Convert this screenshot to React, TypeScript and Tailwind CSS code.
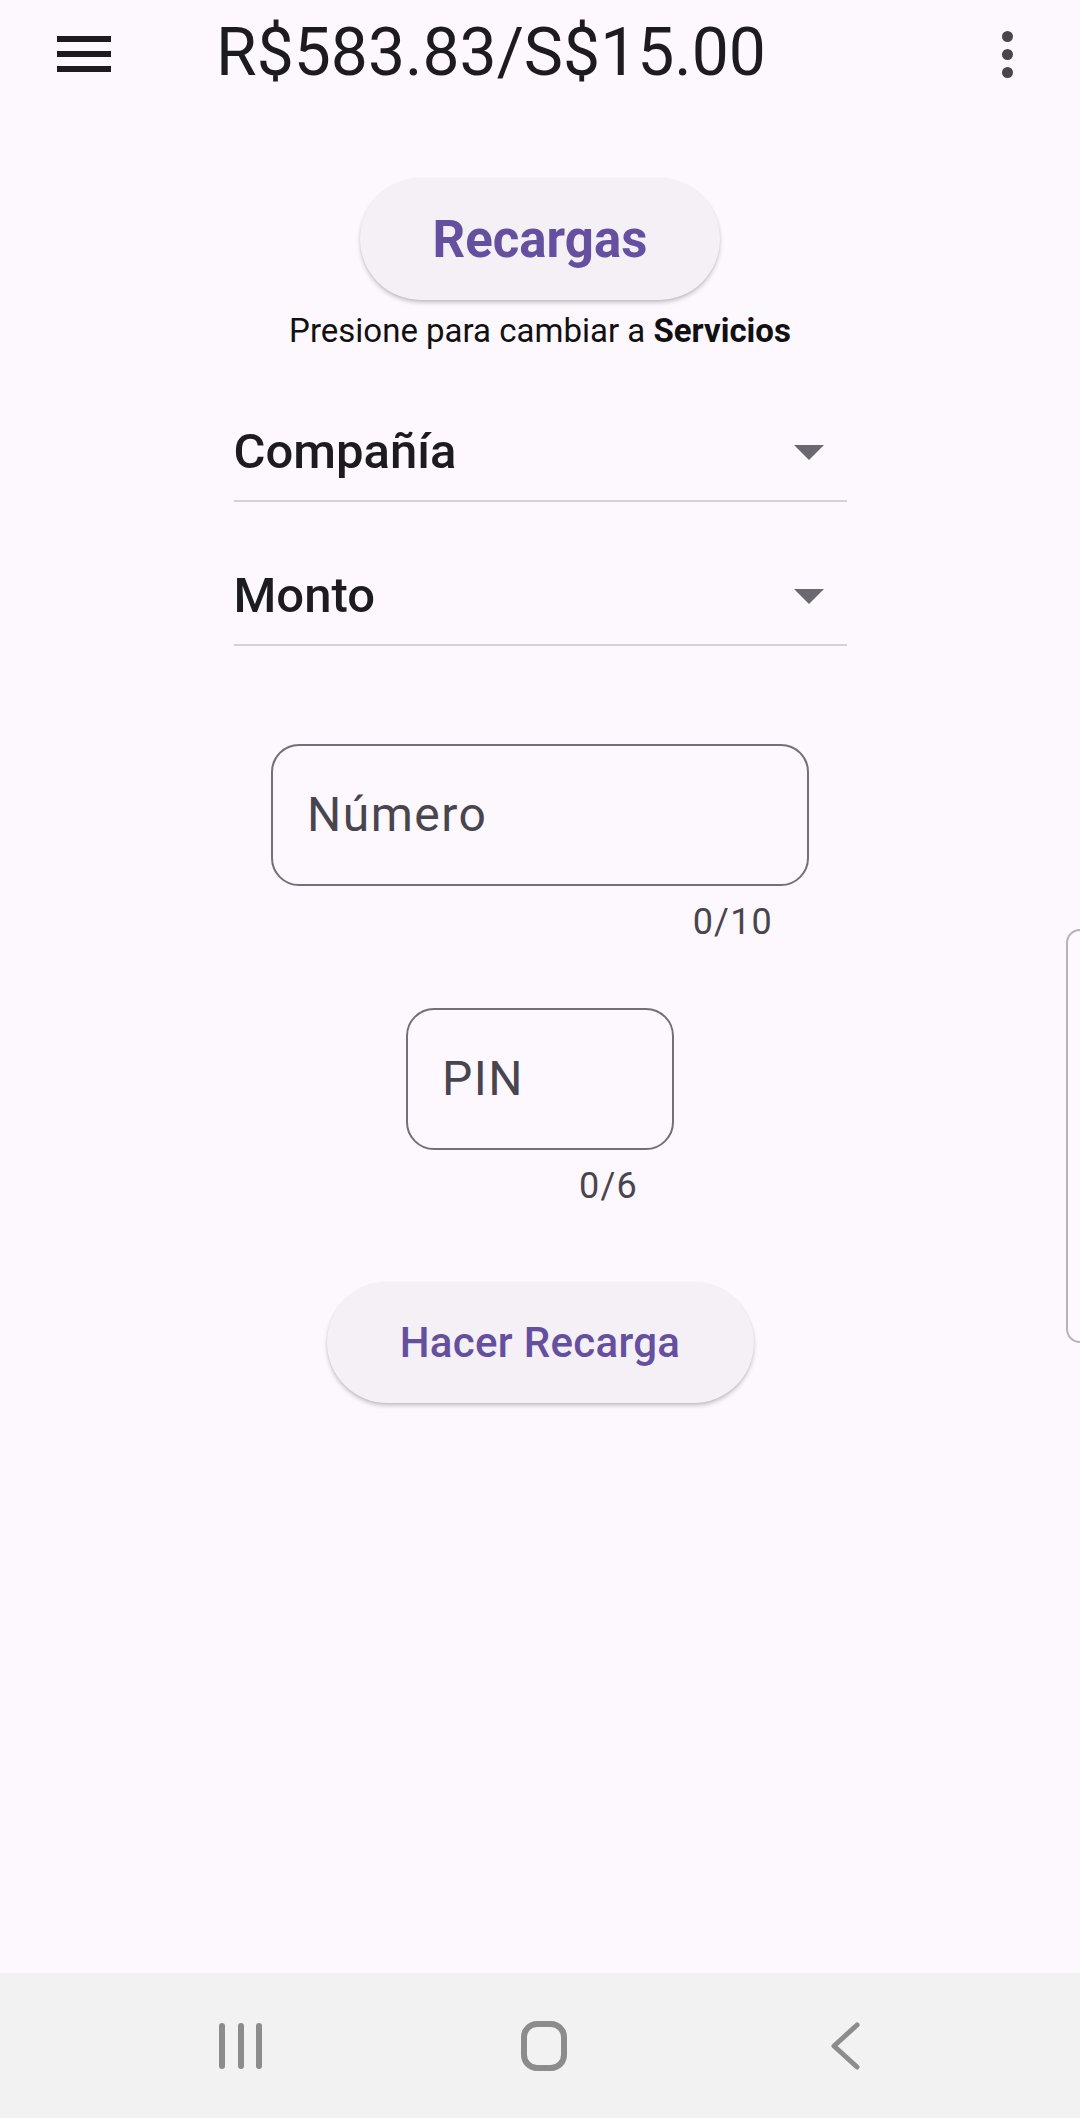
import React from "react";

const font = { fontFamily: "Roboto, 'Noto Sans', sans-serif" };

function Dropdown({ label }: { label: string }) {
  return (
    <div className="w-[613px] flex items-center justify-between border-b-2 border-[#d6d1d9] pb-[20px]">
      <span className="text-[49px] leading-[56px] font-medium text-[#1d1b20]">{label}</span>
      <svg width="30" height="15" viewBox="0 0 30 15" className="mr-[23px]">
        <path d="M0 0 L30 0 L15 15 Z" fill="#6b6870" />
      </svg>
    </div>
  );
}

export default function App() {
  return (
    <div style={font} className="relative w-[1080px] h-[2118px] bg-[#fdf7fe] flex flex-col overflow-hidden">
      {/* Header */}
      <div className="h-[108px] flex items-center shrink-0">
        <div className="ml-[57px] w-[54px] flex flex-col gap-[9px]">
          <div className="h-[6px] bg-[#1d1b20]" />
          <div className="h-[6px] bg-[#1d1b20]" />
          <div className="h-[6px] bg-[#1d1b20]" />
        </div>
        <div className="ml-[105px] text-[66px] leading-[66px] text-[#1d1b20] mt-[-3px]">R$583.83/S$15.00</div>
        <div className="ml-auto mr-[67px] flex flex-col gap-[7px]">
          <div className="w-[11px] h-[11px] rounded-full bg-[#49454f]" />
          <div className="w-[11px] h-[11px] rounded-full bg-[#49454f]" />
          <div className="w-[11px] h-[11px] rounded-full bg-[#49454f]" />
        </div>
      </div>

      {/* Main */}
      <div className="flex-1 flex flex-col items-center">
        <button className="mt-[70px] w-[360px] h-[122px] rounded-full bg-[#f5eff6] shadow-[0_3px_4px_rgba(0,0,0,0.18),0_1px_2px_rgba(0,0,0,0.08)] flex items-center justify-center">
          <span className="text-[51px] font-bold text-[#65509f] leading-none">Recargas</span>
        </button>
        <div className="mt-[11px] text-[33px] leading-[39px] text-[#111111]">
          Presione para cambiar a <span className="font-bold">Servicios</span>
        </div>

        <div className="mt-[74px]">
          <Dropdown label="Compañía" />
        </div>
        <div className="mt-[66px]">
          <Dropdown label="Monto" />
        </div>

        <div className="mt-[98px] flex flex-col">
          <div className="w-[538px] h-[142px] border-2 border-[#747079] rounded-[28px] flex items-center pl-[34px]">
            <span className="text-[48px] leading-[56px] text-[#49454f] tracking-[1.5px]">Número</span>
          </div>
          <div className="mt-[12px] self-end pr-[36px] text-[36px] leading-[48px] text-[#49454f] tracking-[1.2px]">0/10</div>
        </div>

        <div className="mt-[62px] flex flex-col">
          <div className="w-[268px] h-[142px] border-2 border-[#747079] rounded-[28px] flex items-center pl-[34px]">
            <span className="text-[48px] leading-[56px] text-[#49454f] tracking-[1.5px]">PIN</span>
          </div>
          <div className="mt-[12px] self-end pr-[36px] text-[36px] leading-[48px] text-[#49454f] tracking-[1.2px]">0/6</div>
        </div>

        <button className="mt-[72px] w-[427px] h-[121px] rounded-full bg-[#f5eff6] shadow-[0_3px_4px_rgba(0,0,0,0.18),0_1px_2px_rgba(0,0,0,0.08)] flex items-center justify-center">
          <span className="text-[42px] font-medium text-[#65509f] leading-none tracking-[0.3px]">Hacer Recarga</span>
        </button>
      </div>

      {/* Edge panel handle */}
      <div className="absolute left-[1066px] top-[929px] w-[40px] h-[414px] rounded-l-[14px] border-2 border-[#b8b3bb] bg-[#fdf9fe]" />

      {/* Android nav bar */}
      <div className="h-[145px] shrink-0 bg-[#f2f2f2] flex items-center">
        <svg width="60" height="60" viewBox="0 0 60 60" className="ml-[211px]">
          <g stroke="#8c8c8c" strokeWidth="6" strokeLinecap="round">
            <line x1="11" y1="10" x2="11" y2="50" />
            <line x1="30" y1="10" x2="30" y2="50" />
            <line x1="48" y1="10" x2="48" y2="50" />
          </g>
        </svg>
        <svg width="60" height="60" viewBox="0 0 60 60" className="ml-[243px]">
          <rect x="10" y="8" width="40" height="44" rx="13" fill="none" stroke="#8c8c8c" strokeWidth="6" />
        </svg>
        <svg width="60" height="60" viewBox="0 0 60 60" className="ml-[242px]">
          <polyline points="41,9 18,30 41,51" fill="none" stroke="#8c8c8c" strokeWidth="5" strokeLinecap="round" strokeLinejoin="round" />
        </svg>
      </div>
    </div>
  );
}
